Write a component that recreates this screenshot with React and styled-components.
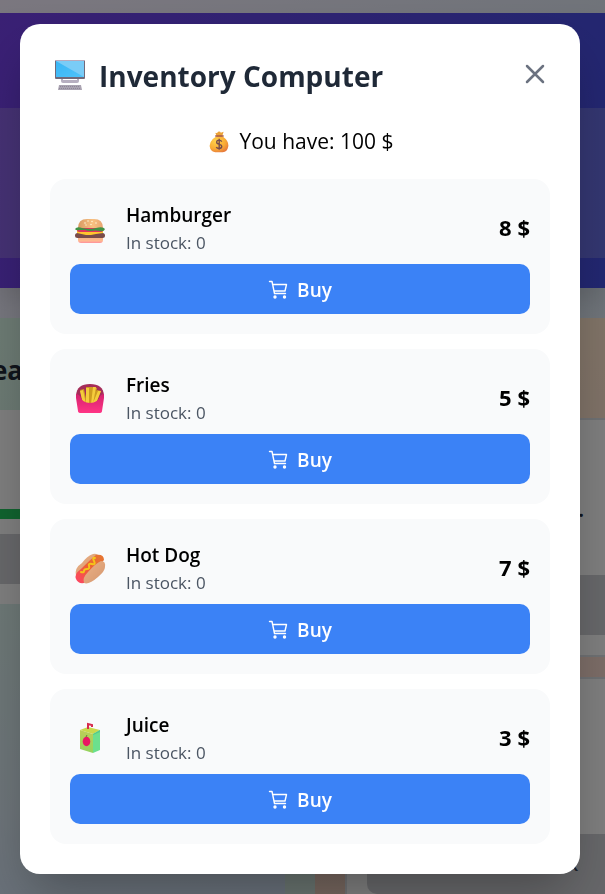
import React from "react";
import styled, { createGlobalStyle } from "styled-components";

const Global = createGlobalStyle`
  *, *::before, *::after { box-sizing: border-box; }
  body {
    margin: 0;
    overflow: hidden;
    font-family: "Open Sans", "Noto Sans", sans-serif;
    color: #000;
  }
  h1, h2, h3, p, ul { margin: 0; padding: 0; }
  button { font: inherit; border: 0; cursor: pointer; }
`;

/* Shop page behind the dialog */
const Shop = styled.div`
  height: 100vh;
  overflow: hidden;
  padding-top: 13px;
  background: linear-gradient(135deg, #f6efff 0%, #dce6f2 50%, #e4ecf4 100%);
`;
const Banner = styled.header`
  padding: 95px 0 30px;
  background: linear-gradient(100deg, #7440e8, #444ee0);
  box-shadow: 0 10px 20px rgba(0, 0, 0, 0.1);
`;
const BannerPanel = styled.div`
  height: 150px;
  background: rgba(235, 235, 225, 0.2);
`;
const Columns = styled.main`
  display: grid;
  grid-template-columns: 52% 1fr;
  margin-top: 30px;
`;
const Station = styled.section`
  height: 600px;
  padding-right: ${(p) => (p.$warm ? 0 : 30)}px;
  padding-left: ${(p) => (p.$warm ? 30 : 0)}px;
  background: ${(p) => (p.$warm
    ? "linear-gradient(#ffe6cd, #f6d8cd 60%, #e8c8b8)"
    : "linear-gradient(#d8f5e6, #cfe6df 60%, #cfe4dc)")};
`;
const StationTitle = styled.h2`
  height: ${(p) => (p.$tall ? 100 : 92)}px;
  margin-left: -8px;
  padding-top: 32px;
  font-size: 26px;
  line-height: 40px;
  color: #1f2937;
`;
const Tile = styled.div`
  height: ${(p) => (p.$tall ? 239 : 194)}px;
  margin-bottom: ${(p) => (p.$tall ? 20 : 0)}px;
  padding-top: ${(p) => (p.$tall ? 0 : 99)}px;
  border: solid #dcdfe4;
  border-width: ${(p) => (p.$tall ? "2px 0 2px 2px" : "0")};
  background: #fafafa;
`;
const TileLabel = styled.p`
  height: 155px;
  padding: 75px 21px 0 0;
  font-size: 20px;
  line-height: 30px;
  font-weight: 700;
  text-align: right;
  color: #1f2937;
`;
const Progress = styled.div`
  height: 10px;
  margin-bottom: 15px;
  background: #22c55e;
`;
const TileAction = styled.div`
  height: ${(p) => (p.$tall ? 60 : 50)}px;
  margin-left: ${(p) => (p.$tall ? 20 : 0)}px;
  padding-right: 27px;
  border-radius: ${(p) => (p.$tall ? "10px 0 0 10px" : "0")};
  background: #cccdd2;
  font-size: 18px;
  line-height: 60px;
  font-weight: 600;
  text-align: right;
  color: #374151;
`;
const Seating = styled.div`
  height: 300px;
  background: linear-gradient(170deg, #d8eeea, #d8e6f0 60%, #ccdcf0);
`;

/* Dialog */
const Overlay = styled.div`
  position: fixed;
  inset: 0;
  display: flex;
  align-items: flex-start;
  padding: 24px 25px 20px 20px;
  background: rgba(0, 0, 0, 0.5);
`;
const Dialog = styled.div`
  flex: 1;
  max-width: 560px;
  padding: 30px;
  border-radius: 20px;
  background: #fff;
  box-shadow: 0 25px 50px -12px rgba(0, 0, 0, 0.3);
`;
const DialogHeader = styled.header`
  display: flex;
  align-items: flex-start;
  justify-content: space-between;
  height: 44px;
`;
const Title = styled.h1`
  display: flex;
  align-items: center;
  gap: 9px;
  font-size: 28px;
  line-height: 44px;
  font-weight: 700;
  color: #1f2937;
`;
const CloseButton = styled.button`
  display: flex;
  padding: 5px 0;
  background: none;
  color: #6b7280;
`;
const Balance = styled.p`
  display: flex;
  align-items: center;
  justify-content: center;
  gap: 9px;
  margin: 28px 0 22px;
  font-size: 21px;
  line-height: 31px;
  font-weight: 500;
`;
const Items = styled.ul`
  display: grid;
  gap: 15px;
  list-style: none;
`;
const Item = styled.li`
  padding: 20px;
  border-radius: 16px;
  background: #f9fafb;
`;
const ItemRow = styled.div`
  display: flex;
  align-items: center;
  gap: 16px;
  margin-bottom: 10px;
`;
const ItemText = styled.div`
  flex: 1;
`;
const ItemName = styled.h3`
  font-size: 19px;
  line-height: 32px;
  font-weight: 600;
`;
const Stock = styled.p`
  font-size: 17px;
  line-height: 23px;
  color: #4b5563;
`;
const Price = styled.span`
  font-size: 22px;
  line-height: 30px;
  font-weight: 700;
`;
const BuyButton = styled.button`
  display: flex;
  align-items: center;
  justify-content: center;
  gap: 9px;
  width: 100%;
  height: 50px;
  padding: 2px 0 0;
  border-radius: 10px;
  background: #3b82f6;
  color: #fff;
  font-size: 19px;
  font-weight: 600;
`;

const Computer = () => (
  <svg width="40" height="40" viewBox="0 0 40 40" aria-hidden="true">
    <defs>
      <linearGradient id="screen" x1="0" y1="0" x2="1" y2="1">
        <stop offset="0" stopColor="#39b5f5" /><stop offset="1" stopColor="#4fc3fa" />
      </linearGradient>
    </defs>
    <path d="M11 22h18v3q0 2-2 2H13q-2 0-2-2z" fill="#b7afc0" />
    <path d="M13 22h14v2H13z" fill="#fff" />
    <rect x="5" y="4" width="30" height="19" rx="1" fill="#716a7b" />
    <rect x="5" y="4" width="30" height="1" fill="#b8a9bd" />
    <rect x="6" y="5" width="28" height="16" fill="url(#screen)" />
    <path d="M6 5h28v16z" fill="#7accf7" />
    <path d="M9 29h22l1 5H8z" fill="#aaa3b1" />
    <path d="M10 30.5h20M9 32.5h22" stroke="#8f8798" strokeDasharray="1 1" />
  </svg>
);

const MoneyBag = () => (
  <svg width="24" height="24" viewBox="0 0 26 26" aria-hidden="true">
    <defs>
      <radialGradient id="bag" cx=".35" cy=".3" r=".8">
        <stop offset="0" stopColor="#ffd24b" /><stop offset=".6" stopColor="#f9ac36" /><stop offset="1" stopColor="#e5763c" />
      </radialGradient>
    </defs>
    <path d="M9 3q2 1 3-1 2-1 3 1l3-1-2 6h-5z" fill="#eca238" />
    <path d="M10 7h7q7 5 6 11-1 6-6 6H9q-5 0-6-6-1-6 7-11z" fill="url(#bag)" />
    <path d="M9.5 6.5h8" stroke="#a75a48" strokeWidth="1.6" strokeLinecap="round" />
    <path d="M16 12.5q-1-1.500-3-1.500-2.500 0-2.500 2.300 0 1.700 2.700 2.200 2.800.5 2.800 2.500T13 20q-2 0-3-1.500M13.200 9.500v12" fill="none" stroke="#754b4d" strokeWidth="1.500" />
  </svg>
);

const Burger = () => (
  <svg width="40" height="40" viewBox="0 -3 40 40" aria-hidden="true">
    <defs>
      <linearGradient id="bun" x1="0" x2="1"><stop stopColor="#d99a63" /><stop offset=".6" stopColor="#f8c081" /><stop offset="1" stopColor="#e7a471" /></linearGradient>
      <linearGradient id="base" x2="0" y2="1"><stop stopColor="#edb07b" /><stop offset=".7" stopColor="#ffb992" /><stop offset="1" stopColor="#ff8f9b" /></linearGradient>
    </defs>
    <path d="M8 26h25v4q0 3-3 3H11q-3 0-3-3z" fill="url(#base)" />
    <rect x="5" y="23" width="30" height="5" rx="2.500" fill="#794b49" />
    <path d="M7 20h26v3l-7 1-5 1-5 0-9-2z" fill="#ffc52e" />
    <rect x="7" y="18" width="26" height="4" rx="2" fill="#df345c" />
    <path d="M8 18q0-9 9-9h7q9 0 9 9z" fill="url(#bun)" />
    <path d="M5 19q2-3 7-1 8 2 14 0 7-2 9 1-1 3-5 2-5-1-9 0-3 0-6-1-2 0-5 0-4 1-5-1z" fill="#409245" />
    <g fill="#fff2cf"><circle cx="15" cy="13" r=".8" /><circle cx="18" cy="11" r=".8" /><circle cx="22" cy="11.500" r=".8" /><circle cx="26" cy="13" r=".8" /><circle cx="21" cy="14.500" r=".8" /><circle cx="16" cy="15" r=".7" /></g>
  </svg>
);

const Fries = () => (
  <svg width="40" height="40" viewBox="0 -2 40 40" aria-hidden="true">
    <defs><linearGradient id="box" x2="0" y2="1"><stop stopColor="#d4226f" /><stop offset="1" stopColor="#ff3485" /></linearGradient></defs>
    <path d="M6 16q1-11 14-11t14 11l-5 7H10z" fill="#a52d59" />
    <g fill="#ce9c20"><path d="M10 11l4-1 3 14h-4zM16 8h6v17h-4zM22 8l5 1-3 16h-4zM27 11l4 1-5 13h-5z" /></g>
    <g fill="#f5cc3c"><path d="M10 12l3-1 3 14h-3zM16 9h3v17h-3zM23 8h3l-3 17h-2zM28 12h3l-5 12h-3z" /></g>
    <path d="M6 15q2 0 4 2 2 7 10 7t10-7q2-2 4-2v4l-2 13q0 2-3 2H11q-3 0-3-2L6 19z" fill="url(#box)" />
  </svg>
);

const HotDog = () => (
  <svg width="40" height="40" viewBox="0 -2 40 40" aria-hidden="true">
    <defs>
      <linearGradient id="roll" x1="0" y1="0" x2="1" y2="1"><stop stopColor="#ecb286" /><stop offset="1" stopColor="#d4966f" /></linearGradient>
      <linearGradient id="sausage" x1="0" y1="1" x2="1" y2="0"><stop stopColor="#ff4468" /><stop offset=".5" stopColor="#ec5f35" /><stop offset="1" stopColor="#e57831" /></linearGradient>
    </defs>
    <path d="M6 27q-2-8 6-13 5-7 11-9 4-1 6 2L11 29z" fill="url(#roll)" />
    <path d="M6 30q-2-5 5-10Q21 10 26 6q8-1 8 5L14 34q-6 1-8-4z" fill="url(#sausage)" />
    <path d="M14 34q-2-5 4-11 8-9 13-11 5 0 4 6 0 4-7 10-9 8-14 6z" fill="url(#roll)" />
    <path d="M11 23q3 1 3-1t3-2 2-3 3-2 2-3 1-3" fill="none" stroke="#f4c419" strokeWidth="2" strokeLinecap="round" strokeLinejoin="round" />
  </svg>
);

const Juice = () => (
  <svg width="40" height="40" viewBox="0 -2 40 40" aria-hidden="true">
    <defs><linearGradient id="front" x2="0" y2="1"><stop stopColor="#bccf57" /><stop offset="1" stopColor="#94d35f" /></linearGradient></defs>
    <path d="M10 11l8-3 12 3-7 4z" fill="#c9d94b" />
    <path d="M10 11l13 4v19l-13-4z" fill="url(#front)" />
    <path d="M23 15l7-4v20l-7 3z" fill="#6be08d" />
    <path d="M23 15l7-4v2l-7 3z" fill="#55c98b" />
    <path d="M18 10V5l4 1v2" fill="none" stroke="#d72b4e" strokeWidth="2" />
    <ellipse cx="16.500" cy="22.500" rx="3.800" ry="4.700" fill="#e91862" />
    <path d="M16 18l1-2" stroke="#647c35" />
  </svg>
);

const Cart = () => (
  <svg width="20" height="20" viewBox="0 0 20 20" fill="none" stroke="currentColor" strokeWidth="1.400" strokeLinecap="round" strokeLinejoin="round" aria-hidden="true">
    <path d="M1.500 1.500h2.500l2.500 12h11M4.500 4.500H18.500l-1.500 6.500H6" />
    <circle cx="7" cy="17" r="1" fill="currentColor" />
    <circle cx="16.500" cy="17" r="1" fill="currentColor" />
  </svg>
);

const Close = () => (
  <svg width="30" height="30" viewBox="0 0 30 30" fill="none" stroke="currentColor" strokeWidth="2.500" strokeLinecap="round" aria-hidden="true">
    <path d="M7 7l16 16M23 7L7 23" />
  </svg>
);

const goods = [
  { name: "Hamburger", price: 8, Icon: Burger },
  { name: "Fries", price: 5, Icon: Fries },
  { name: "Hot Dog", price: 7, Icon: HotDog },
  { name: "Juice", price: 3, Icon: Juice },
];

export default function App() {
  return (
    <>
      <Global />
      <Shop aria-hidden="true">
        <Banner><BannerPanel /></Banner>
        <Columns>
          <Station>
            <StationTitle>ea</StationTitle>
            <Tile><Progress /><TileAction /></Tile>
            <Seating />
          </Station>
          <Station $warm>
            <StationTitle $tall />
            <Tile $tall><TileLabel>.</TileLabel><TileAction $tall /></Tile>
            <Tile $tall><TileLabel /><TileAction $tall>k</TileAction></Tile>
          </Station>
        </Columns>
      </Shop>
      <Overlay>
        <Dialog role="dialog" aria-modal="true" aria-labelledby="dialog-title">
          <DialogHeader>
            <Title id="dialog-title"><Computer />Inventory Computer</Title>
            <CloseButton type="button" aria-label="Close"><Close /></CloseButton>
          </DialogHeader>
          <Balance><MoneyBag />You have: 100 $</Balance>
          <Items>
            {goods.map(({ name, price, Icon }) => (
              <Item key={name}>
                <ItemRow>
                  <Icon />
                  <ItemText>
                    <ItemName>{name}</ItemName>
                    <Stock>In stock: 0</Stock>
                  </ItemText>
                  <Price>{price} $</Price>
                </ItemRow>
                <BuyButton type="button"><Cart />Buy</BuyButton>
              </Item>
            ))}
          </Items>
        </Dialog>
      </Overlay>
    </>
  );
}
